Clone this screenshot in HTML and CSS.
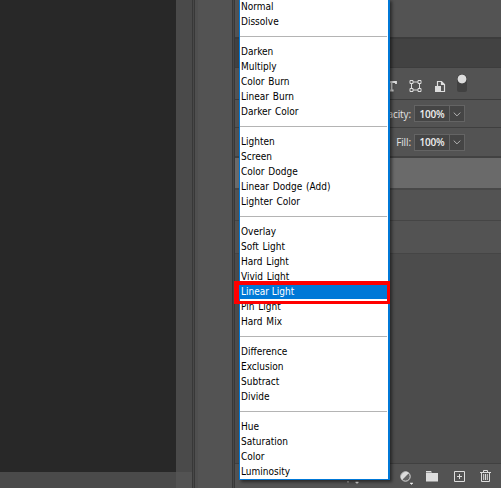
FILE: index.html
```
<!DOCTYPE html>
<html lang="en">
<head>
<meta charset="utf-8">
<title>Layers – Blending mode</title>
<link rel="stylesheet" href="styles.css">
</head>
<body>
<div class="app">
  <main class="workspace">
    <div class="canvas"></div>
    <div class="vscroll"></div>
    <div class="hscroll"></div>
    <div class="corner"></div>
  </main>
  <div class="gutter"></div>
  <div class="dock"></div>
  <div class="gutter gutter-right"></div>
  <aside class="panel">
    <div class="upper"></div>
    <div class="tabs"></div>
    <div class="filters">
      <svg class="ic-type" width="12" height="12" viewBox="0 0 12 12"><path d="M2 4V2h9v2M6.500 2v9M4.500 10.500h4" fill="none" stroke="#ddd" stroke-width="1.8"/></svg>
      <svg class="ic-shape" width="13" height="12" viewBox="0 0 13 12"><path d="M3 2h7M3 10h7M2.500 3v6M10.500 3v6" stroke="#ddd" fill="none"/><path d="M1 .5h3v3H1zM9 .5h3v3H9zM1 8.500h3v3H1zM9 8.500h3v3H9z" fill="#535353" stroke="#ddd"/></svg>
      <svg class="ic-smart" width="12" height="13" viewBox="0 0 12 13"><path d="M3.500 6V1.500h4l3 3v7H7M7.500 1.500v3h3" fill="none" stroke="#ddd" stroke-width="1.2"/><path d="M1 6h6v6H1z" fill="#ddd"/></svg>
      <span class="toggle"></span>
    </div>
    <div class="setting blend"><span class="label">Opacity:</span><span class="field"><b>100%</b><svg width="15" height="16" viewBox="0 0 15 16"><path d="M4 6.500l3.500 3.500L11 6.500" fill="none" stroke="#bbb"/></svg></span></div>
    <div class="setting fill"><span class="label">Fill:</span><span class="field"><b>100%</b><svg width="15" height="16" viewBox="0 0 15 16"><path d="M4 6.500l3.500 3.500L11 6.500" fill="none" stroke="#bbb"/></svg></span></div>
    <div class="layer active"></div>
    <div class="layer"></div>
    <div class="layer last"></div>
    <div class="empty"></div>
    <footer class="actions">
      <svg class="ic-mask" width="12" height="14" viewBox="0 0 12 14"><path d="M0 11h2v1.500H0z" fill="#999"/><path d="M8.500 12h3L10 13.500z" fill="#eee" stroke="#eee" stroke-width=".5"/></svg>
      <svg class="ic-adjust" width="14" height="14" viewBox="0 0 14 14"><circle cx="5.500" cy="5.500" r="4.700" fill="#666" stroke="#ddd"/><path d="M9 2A5 5 0 0 0 2 9z" fill="#ddd"/><path d="M10 12h3l-1.500 1.500z" fill="#eee" stroke="#eee" stroke-width=".5"/></svg>
      <svg class="ic-group" width="12" height="11" viewBox="0 0 12 11"><path d="M0 0h5l1 1.500H0zM0 2h12v8.500H0z" fill="#ddd"/></svg>
      <svg class="ic-new" width="11" height="11" viewBox="0 0 11 11"><path d="M.5.5h10v10H.5zM3 5.500h5M5.500 3v5" fill="none" stroke="#ddd"/></svg>
      <svg class="ic-trash" width="11" height="12" viewBox="0 0 11 12"><path d="M0 2.500h11M3.500 2V.5h4V2M1.500 3v8.500h8V3M3.700 4v6M5.500 4v6M7.300 4v6" fill="none" stroke="#ddd"/></svg>
    </footer>
  </aside>
</div>

<ul class="menu">
  <li>Normal</li>
  <li>Dissolve</li>
  <li class="sep"></li>
  <li>Darken</li>
  <li>Multiply</li>
  <li>Color Burn</li>
  <li>Linear Burn</li>
  <li>Darker Color</li>
  <li class="sep"></li>
  <li>Lighten</li>
  <li>Screen</li>
  <li>Color Dodge</li>
  <li>Linear Dodge (Add)</li>
  <li>Lighter Color</li>
  <li class="sep"></li>
  <li>Overlay</li>
  <li>Soft Light</li>
  <li>Hard Light</li>
  <li>Vivid Light</li>
  <li class="selected">Linear Light</li>
  <li>Pin Light</li>
  <li>Hard Mix</li>
  <li class="sep"></li>
  <li>Difference</li>
  <li>Exclusion</li>
  <li>Subtract</li>
  <li>Divide</li>
  <li class="sep"></li>
  <li>Hue</li>
  <li>Saturation</li>
  <li>Color</li>
  <li>Luminosity</li>
</ul>
<div class="highlight"></div>
</body>
</html>
```

FILE: styles.css
```
* { box-sizing: border-box; }
body {
  margin: 0;
  width: 501px;
  height: 488px;
  overflow: hidden;
  position: relative;
  background: #535353;
  font-family: "DejaVu Sans Condensed", "DejaVu Sans", sans-serif;
  font-stretch: condensed;
}
svg { display: block; flex: none; }
.app { display: flex; height: 488px; }
.workspace {
  flex: none;
  width: 192px;
  display: grid;
  grid-template: 472px 16px / 176px 16px;
}
.canvas { background: #282828; }
.vscroll, .hscroll { background: #4a4a4a; }
.corner { background: #535353; }
.gutter {
  flex: none;
  width: 3px;
  background: #484848;
  border: solid #383838;
  border-width: 0 1px;
}
.dock {
  flex: none;
  width: 37px;
  background: #535353;
  border-left: 3px solid #4f4f4f;
}
.panel {
  flex: 1;
  display: flex;
  flex-direction: column;
  background: #4c4c4c;
}
.upper { height: 39px; background: #535353; border-bottom: 2px solid #3c3c3c; }
.tabs { height: 29px; background: #424242; border-bottom: 1px solid #3d3d3d; }
.filters {
  height: 32px;
  background: #535353;
  border-bottom: 1px solid #3c3c3c;
  display: flex;
  align-items: center;
  padding: 5px 0 0 150px;
}
.ic-shape { margin-left: 12px; }
.ic-smart { margin-left: 12px; }
.toggle {
  width: 10px;
  height: 18px;
  margin: -6px 0 0 11px;
  border-radius: 5px 5px 2px 2px;
  background: radial-gradient(circle at 5px 5px, #ddd 4px, #414141 4.800px);
}
.setting {
  height: 28px;
  background: #535353;
  border-bottom: 1px solid #3f3f3f;
  display: flex;
  align-items: center;
  color: #e4e4e4;
  font: 10px "Open Sans", sans-serif;
}
.setting.fill { height: 30px; border-bottom: 2px solid #424242; }
.label { width: 176px; text-align: right; letter-spacing: -.1px; }
.field {
  margin-left: 3px;
  width: 51px;
  height: 17px;
  display: flex;
  align-items: center;
  background: #454545;
  border: 1px solid #646464;
}
.field b { width: 35px; text-align: center; color: #eee; font-weight: 600; letter-spacing: -.2px; }
.field svg { border-left: 1px solid #646464; }
.layer { height: 31px; background: #535353; border-bottom: 1px solid #454545; }
.layer.active { height: 32px; background: #6a6a6a; border-bottom: 2px solid #484848; }
.layer.last { height: 33px; }
.empty { flex: 1; }
.actions {
  height: 25px;
  flex: none;
  background: #535353;
  border-top: 1px solid #404040;
  display: flex;
  align-items: center;
  padding-left: 112px;
}
.ic-mask { margin-top: 2px; }
.ic-adjust { margin: 3px 0 0 41px; }
.ic-group { margin-left: 12px; }
.ic-new { margin-left: 16px; }
.ic-trash { margin-left: 15px; }

.menu {
  position: absolute;
  left: 239px;
  top: -1px;
  width: 151px;
  height: 481px;
  margin: 0;
  padding: 0;
  list-style: none;
  background: #fff;
  border: solid #0078d7;
  border-width: 0 2px 1px 1px;
  box-shadow: 2px 2px 3px rgba(0, 0, 0, .5);
  color: #000;
  font-size: 10px;
  word-spacing: 1px;
}
.menu li { height: 15px; line-height: 15px; padding-left: 1px; white-space: nowrap; }
.menu .sep {
  margin-right: 1px;
  background: linear-gradient(#b4b4b4, #b4b4b4) 0 7px / 100% 1px no-repeat;
}
.menu .selected {
  background: #0078d7;
  color: #fff;
  word-spacing: 0;
}
.highlight {
  position: absolute;
  left: 234px;
  top: 281px;
  width: 156px;
  height: 23px;
  border: solid #f00;
  border-width: 4px 3px 3px 5px;
}
```
